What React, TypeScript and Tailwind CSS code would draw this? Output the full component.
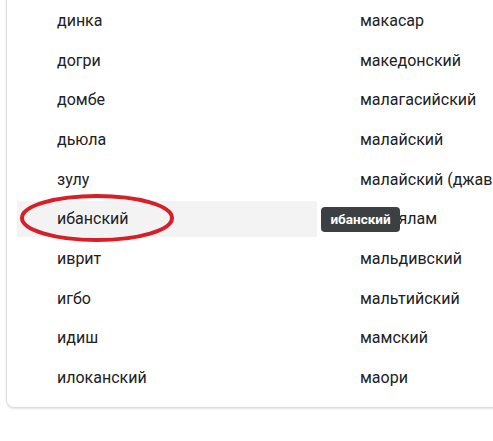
import React from "react";

const col1 = ["динка", "догри", "домбе", "дьюла", "зулу", "ибанский", "иврит", "игбо", "идиш", "илоканский"];
const col2 = ["макасар", "македонский", "малагасийский", "малайский", "малайский (джави)", "малаялам", "мальдивский", "мальтийский", "мамский", "маори"];

export default function App() {
  return (
    <div className="relative w-[493px] h-[441px] overflow-hidden bg-white" style={{ fontFamily: "Roboto, 'Liberation Sans', sans-serif" }}>
      <div className="ml-[6px] w-[520px] border-l border-b border-[#dadce0] rounded-bl-[8px] shadow-[0_1px_2px_rgba(60,64,67,0.15)] pt-[3px] pb-[11px] pl-[10px]">
        <div className="flex gap-[3px]">
          <div className="flex flex-col gap-[3.67px] w-[300px]">
            {col1.map((t) => (
              <div key={t} className={`h-[36px] flex items-center pl-[40px] text-[16px] text-[#202124] whitespace-nowrap ${t === "ибанский" ? "bg-[#f3f3f3]" : ""}`}>
                {t}
              </div>
            ))}
          </div>
          <div className="flex flex-col gap-[3.67px] w-[200px]">
            {col2.map((t) => (
              <div key={t} className="h-[36px] flex items-center pl-[40px] text-[16px] text-[#202124] whitespace-nowrap">
                {t}
              </div>
            ))}
          </div>
        </div>
      </div>
      <div className="absolute left-[321px] top-[207px] h-[25px] w-[79px] rounded-[4px] bg-[#3c4043] text-white text-[13.5px] font-bold flex items-center justify-center">
        ибанский
      </div>
      <svg className="absolute left-0 top-0 pointer-events-none" width="493" height="441">
        <ellipse cx="97" cy="218" rx="75" ry="22" fill="none" stroke="#d62027" strokeWidth="4" />
      </svg>
    </div>
  );
}
